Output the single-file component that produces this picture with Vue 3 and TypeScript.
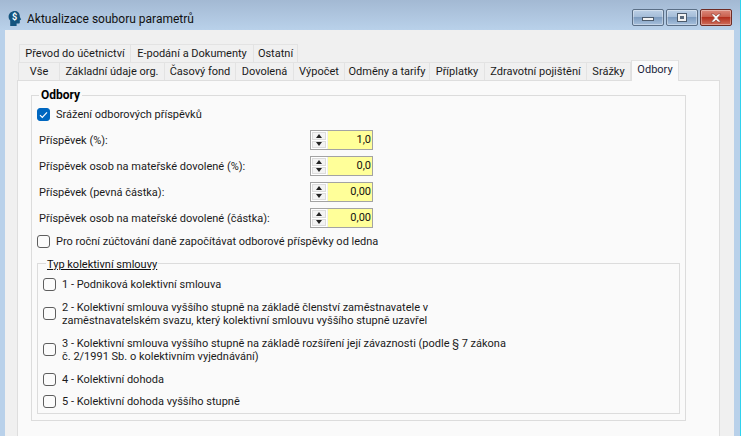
<script setup lang="ts">
const row1 = [
  { label: 'Převod do účetnictví', w: 112 },
  { label: 'E-podání a Dokumenty', w: 123 },
  { label: 'Ostatní', w: 44 },
]
const row2 = [
  { label: 'Vše', w: 42 },
  { label: 'Základní údaje org.', w: 105 },
  { label: 'Časový fond', w: 71 },
  { label: 'Dovolená', w: 58 },
  { label: 'Výpočet', w: 51 },
  { label: 'Odměny a tarify', w: 85 },
  { label: 'Příplatky', w: 55 },
  { label: 'Zdravotní pojištění', w: 102 },
  { label: 'Srážky', w: 44 },
  { label: 'Odbory', w: 48, active: true },
]
const fields = [
  { label: 'Příspěvek (%):', value: '1,0' },
  { label: 'Příspěvek osob na mateřské dovolené (%):', value: '0,0' },
  { label: 'Příspěvek (pevná částka):', value: '0,00' },
  { label: 'Příspěvek osob na mateřské dovolené (částka):', value: '0,00' },
]
const options = [
  { lines: ['1 - Podniková kolektivní smlouva'], h: 27 },
  {
    lines: [
      '2 - Kolektivní smlouva vyššího stupně na základě členství zaměstnavatele v',
      'zaměstnavatelském svazu, který kolektivní smlouvu vyššího stupně uzavřel',
    ],
    h: 31,
  },
  {
    lines: [
      '3 - Kolektivní smlouva vyššího stupně na základě rozšíření její závaznosti (podle § 7 zákona',
      'č. 2/1991 Sb. o kolektivním vyjednávání)',
    ],
    h: 41,
  },
  { lines: ['4 - Kolektivní dohoda'], h: 18 },
  { lines: ['5 - Kolektivní dohoda vyššího stupně'], h: 26 },
]
</script>

<template>
  <div class="window">
    <header class="titlebar">
      <svg class="appicon" width="16" height="16" viewBox="0 0 16 16">
        <path d="M8 1C4.4 1 1.600 3.400 1.600 6.800c0 1.600.6 2.800 1.600 3.800V16h6.400v-2.400h2c.8 0 1.200-.5 1.200-1.200V10.200l1.400-.6L12.900 7C13 3.600 11 1 8 1z" fill="#14557f" />
        <text x="7.500" y="10" class="dollar" text-anchor="middle">$</text>
      </svg>
      <span class="title">Aktualizace souboru parametrů</span>
      <div class="caption">
        <span class="capbtn"><i class="glyph min"></i></span>
        <span class="capbtn"><i class="glyph max"></i></span>
        <span class="capbtn close">
          <svg width="16" height="10" viewBox="0 0 16 10">
            <path d="M3 1h3l2 2 2-2h3L9.500 5 13 9h-3L8 7 6 9H3l3.500-4z" fill="#f4f4f4" stroke="#8c3a30" stroke-width=".6" />
          </svg>
        </span>
      </div>
    </header>

    <main class="client">
      <div class="tabrow first">
        <span v-for="t in row1" :key="t.label" class="tab" :style="{ width: t.w + 'px' }">{{ t.label }}</span>
      </div>
      <div class="tabrow second">
        <span
          v-for="t in row2"
          :key="t.label"
          class="tab"
          :class="{ active: t.active }"
          :style="{ width: t.w + 'px' }"
        >{{ t.label }}</span>
      </div>

      <section class="panel">
        <fieldset class="group outer">
          <legend class="legend-main">Odbory</legend>

          <label class="check main">
            <span class="box on">
              <svg width="9" height="8" viewBox="0 0 9 8">
                <path d="M1 4.200l2.300 2.300L8 1.300" fill="none" stroke="#fff" stroke-width="1.200" />
              </svg>
            </span>
            <span>Srážení odborových příspěvků</span>
          </label>

          <div class="fields">
            <div v-for="f in fields" :key="f.label" class="field">
              <span class="field-label">{{ f.label }}</span>
              <div class="spin">
                <div class="arrows">
                  <span class="arrow up"></span>
                  <span class="arrow down"></span>
                </div>
                <span class="value">{{ f.value }}</span>
              </div>
            </div>
          </div>

          <label class="check annual">
            <span class="box"></span>
            <span>Pro roční zúčtování daně započítávat odborové příspěvky od ledna</span>
          </label>

          <fieldset class="group inner">
            <legend class="legend-sub">Typ kolektivní smlouvy</legend>
            <label v-for="o in options" :key="o.lines[0]" class="check option" :style="{ height: o.h + 'px' }">
              <span class="box"></span>
              <span class="option-text">
                <span v-for="l in o.lines" :key="l" class="line">{{ l }}</span>
              </span>
            </label>
          </fieldset>
        </fieldset>
      </section>
    </main>
  </div>
</template>

<style>
html, body { margin: 0; padding: 0; background: #b9d1ea; overflow: hidden; }
</style>

<style scoped>
.window {
  width: 741px;
  height: 436px;
  box-sizing: border-box;
  padding: 0 6px 0 5px;
  overflow: hidden;
  font-family: Roboto, sans-serif;
  font-size: 11px;
  color: #1a1a1a;
  background: linear-gradient(#a3b9d3 0, #b9d1ea 30px);
  border-right: 1px solid #2fd2ee;
  display: flex;
  flex-direction: column;
}
.titlebar { height: 30px; flex: none; display: flex; padding-left: 2px; }
.appicon { flex: none; margin-top: 10px; }
.dollar { font: bold 9px Roboto, sans-serif; fill: #fff; }
.title { margin-left: 4px; margin-top: 11px; line-height: 16px; color: #111; font-size: 12px; }
.caption { margin-left: auto; display: flex; gap: 2px; margin-right: 2px; margin-top: 9px; height: 17px; }
.capbtn {
  width: 32px; height: 17px; box-sizing: border-box;
  border: 1px solid #5b6f86; border-radius: 2px;
  background: linear-gradient(#bcd0e6 0, #a5bdd8 45%, #7e9dc0 50%, #a7c0dc 100%);
  display: flex; align-items: center; justify-content: center;
  box-shadow: inset 0 0 0 1px rgba(255,255,255,.35);
}
.capbtn.close {
  border-color: #6e2c24;
  background: linear-gradient(#dc8a7c 0, #c9604f 45%, #b4301e 50%, #cf6f5d 100%);
}
.glyph { display: block; box-sizing: border-box; }
.glyph.min { width: 12px; height: 4px; background: #f2f2f2; border: 1px solid #4c5b6c; margin-top: 3px; }
.glyph.max { width: 10px; height: 9px; background: #f2f2f2; border: 1px solid #4c5b6c; position: relative; }
.glyph.max::after { content: ""; position: absolute; left: 2px; right: 2px; top: 2px; bottom: 2px; background: #5c6b7c; }
.client { flex: 1; background: #f0f0f0; padding: 14px 14px 0 12px; min-height: 0; }
.tabrow { display: flex; height: 18px; }
.tabrow.first { padding-left: 2px; }
.tabrow.second { padding-left: 1px; position: relative; }
.tab {
  box-sizing: border-box; text-align: center; flex: none; white-space: nowrap;
  height: 18px; line-height: 17px; background: #f0f0f0;
  border: solid #e3e3e3; border-width: 1px 1px 0 0;
}
.tabrow .tab:first-child { border-left: 1px solid #e3e3e3; }
.tab.active {
  height: 21px; margin-top: -2px; background: #fafafa; position: relative; z-index: 1;
  line-height: 18px; border-left: 1px solid #e0e0e0; border-right: 1px solid #e0e0e0; color: #1b1f3a;
}
.panel {
  height: 356px; width: 703px; box-sizing: border-box; background: #fafafa;
  border: 1px solid #dedede; border-bottom: 0; padding: 7px 0 0 13px;
}
.group { margin: 0; padding: 0; border: 1px solid #dcdcdc; min-width: 0; box-sizing: border-box; }
.outer { width: 655px; height: 333px; padding: 0 5px; }
.legend-main { font-weight: 700; font-size: 12px; margin-left: 2px; padding: 1px 2px 0; line-height: 13px; color: #000; }
.legend-sub {
  margin-left: 3px; padding: 2px 1px 0; line-height: 13px; color: #111;
  text-decoration: underline;
}
.check { display: flex; align-items: center; gap: 6px; }
.main { margin-top: 6px; height: 13px; }
.box {
  width: 13px; height: 13px; flex: none; box-sizing: border-box;
  border: 1px solid #5e5e5e; border-radius: 3px; background: #fbfbfb;
  display: flex; align-items: center; justify-content: center;
}
.box.on { background: #0067c0; border-color: #0067c0; }
.fields { display: flex; flex-direction: column; gap: 6px; margin-top: 9px; }
.field { display: flex; align-items: center; height: 20px; }
.field-label { width: 271px; flex: none; margin-left: 2px; }
.spin {
  width: 63px; height: 20px; box-sizing: border-box;
  border: 1px solid #a3a3a3; background: #ffff99; display: flex; align-items: stretch;
}
.arrows {
  width: 17px; flex: none; background: #fff; display: flex; flex-direction: column;
  padding: 1px; box-sizing: border-box; gap: 1px; border-right: 1px solid #f0f0f0;
}
.arrow { flex: 1; background: #f3f3f3; border: 1px solid #dcdcdc; position: relative; box-sizing: border-box; }
.arrow::after {
  content: ""; position: absolute; left: 50%; top: 50%; transform: translate(-50%, -50%);
  border-left: 3px solid transparent; border-right: 3px solid transparent;
}
.arrow.up::after { border-bottom: 4px solid #222; }
.arrow.down::after { border-top: 4px solid #222; }
.value { flex: 1; text-align: right; padding-right: 1px; line-height: 18px; color: #111; }
.annual { margin-top: 7px; height: 13px; }
.inner { width: 643px; height: 158px; margin-top: 8px; padding: 0 0 0 5px; }
.option-text { display: flex; flex-direction: column; line-height: 13px; }
.line { white-space: nowrap; }
</style>
